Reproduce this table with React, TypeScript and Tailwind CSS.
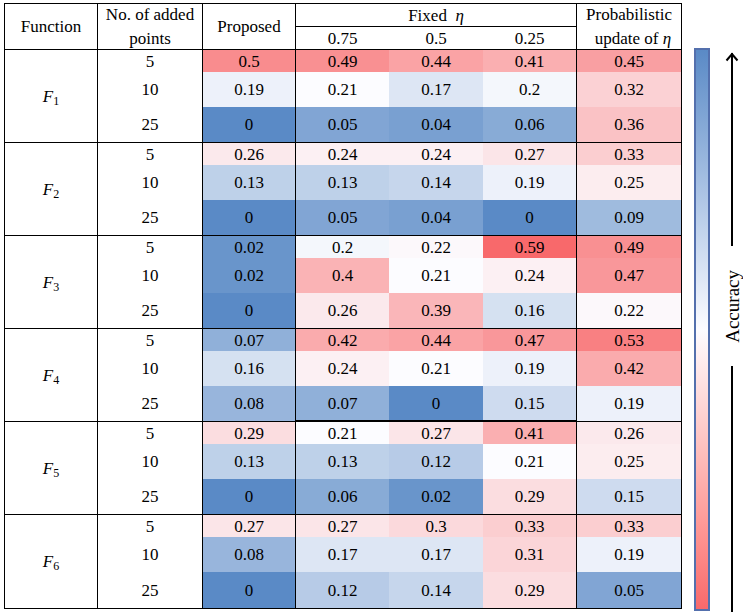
import React from "react";

type Block = { label: string; rows: { n: number; vals: number[] }[] };

const blocks: Block[] = [
  { label: "1", rows: [
    { n: 5, vals: [0.5, 0.49, 0.44, 0.41, 0.45] },
    { n: 10, vals: [0.19, 0.21, 0.17, 0.2, 0.32] },
    { n: 25, vals: [0, 0.05, 0.04, 0.06, 0.36] },
  ] },
  { label: "2", rows: [
    { n: 5, vals: [0.26, 0.24, 0.24, 0.27, 0.33] },
    { n: 10, vals: [0.13, 0.13, 0.14, 0.19, 0.25] },
    { n: 25, vals: [0, 0.05, 0.04, 0, 0.09] },
  ] },
  { label: "3", rows: [
    { n: 5, vals: [0.02, 0.2, 0.22, 0.59, 0.49] },
    { n: 10, vals: [0.02, 0.4, 0.21, 0.24, 0.47] },
    { n: 25, vals: [0, 0.26, 0.39, 0.16, 0.22] },
  ] },
  { label: "4", rows: [
    { n: 5, vals: [0.07, 0.42, 0.44, 0.47, 0.53] },
    { n: 10, vals: [0.16, 0.24, 0.21, 0.19, 0.42] },
    { n: 25, vals: [0.08, 0.07, 0, 0.15, 0.19] },
  ] },
  { label: "5", rows: [
    { n: 5, vals: [0.29, 0.21, 0.27, 0.41, 0.26] },
    { n: 10, vals: [0.13, 0.13, 0.12, 0.21, 0.25] },
    { n: 25, vals: [0, 0.06, 0.02, 0.29, 0.15] },
  ] },
  { label: "6", rows: [
    { n: 5, vals: [0.27, 0.27, 0.3, 0.33, 0.33] },
    { n: 10, vals: [0.08, 0.17, 0.17, 0.31, 0.19] },
    { n: 25, vals: [0, 0.12, 0.14, 0.29, 0.05] },
  ] },
];

// excel style 3-colour scale: min blue, median white, max red
const all = blocks.flatMap((b) => b.rows.flatMap((r) => r.vals)).sort((a, b) => a - b);
const lo = all[0];
const hi = all[all.length - 1];
const mid = (all[44] + all[45]) / 2;
const BLUE = [90, 138, 198];
const WHITE = [252, 252, 255];
const RED = [248, 105, 107];

function mix(a: number[], b: number[], t: number) {
  const c = a.map((v, i) => Math.round(v + (b[i] - v) * t));
  return `rgb(${c[0]}, ${c[1]}, ${c[2]})`;
}

function cellColor(v: number) {
  if (v <= mid) return mix(BLUE, WHITE, (v - lo) / (mid - lo));
  return mix(WHITE, RED, (v - mid) / (hi - mid));
}

function Eta() {
  return <i>η</i>;
}

const cell = "flex items-center justify-center border-black";

export default function App() {
  return (
    <div className="flex h-[614px] w-[747px] bg-white pl-[4px] pt-[3px] font-['Liberation_Serif',serif] text-[17px] leading-none text-black">
      <div className="grid h-fit grid-cols-[93px_105px_93px_93px_94px_94px_104px] grid-rows-[23px_23px_repeat(6,22px_35px_36px)] border-[1.5px] border-black">
        {/* header */}
        <div className={`${cell} row-span-2 border-r-[1.5px] border-b-[1.5px]`}>Function</div>
        <div className={`${cell} row-span-2 flex-col gap-[7px] border-r-[1.5px] border-b-[1.5px]`}>
          <span>No. of added</span>
          <span>points</span>
        </div>
        <div className={`${cell} row-span-2 border-r-[1.5px] border-b-[1.5px]`}>Proposed</div>
        <div className={`${cell} col-span-3 border-r-[1.5px] border-b-[1.5px]`}>
          <span>
            Fixed&nbsp; <Eta />
          </span>
        </div>
        <div className={`${cell} row-span-2 flex-col gap-[7px] border-b-[1.5px]`}>
          <span>Probabilistic</span>
          <span className="pl-[8px]">
            update of <Eta />
          </span>
        </div>
        <div className={`${cell} border-b-[1.5px]`}>0.75</div>
        <div className={`${cell} border-b-[1.5px]`}>0.5</div>
        <div className={`${cell} border-r-[1.5px] border-b-[1.5px]`}>0.25</div>

        {/* body */}
        {blocks.map((b, bi) => {
          const lastBlock = bi === blocks.length - 1;
          return b.rows.map((r, ri) => {
            const lastRow = ri === 2 && !lastBlock;
            return (
              <React.Fragment key={`${bi}-${ri}`}>
                {ri === 0 && (
                  <div className={`${cell} row-span-3 border-r-[1.5px] ${lastBlock ? "" : "border-b-[1.5px]"}`}>
                    <span>
                      <i>F</i>
                      <sub className="text-[12px]">{b.label}</sub>
                    </span>
                  </div>
                )}
                <div className={`${cell} border-r-[1.5px] ${lastRow ? "border-b-[1.5px]" : ""}`}>{r.n}</div>
                {r.vals.map((v, vi) => {
                  const thick = bi === 3 && ri === 2 && vi >= 1 && vi <= 3;
                  return (
                    <div
                      key={vi}
                      className={`${cell} ${vi === 0 || vi === 3 ? "border-r-[1.5px]" : ""} ${
                        thick ? "border-b-[2.5px]" : lastRow ? "border-b-[1.5px]" : ""
                      }`}
                      style={{ backgroundColor: cellColor(v) }}
                    >
                      {v}
                    </div>
                  );
                })}
              </React.Fragment>
            );
          });
        })}
      </div>

      <div className="ml-[12px] mt-[45px] h-[563px] w-[16px] border-2 border-[#5470ad] bg-linear-to-b from-[#5a8ac6] via-[#fcfcff] to-[#f8696b]" />

      <div className="ml-[15px] mt-[49px] flex w-[14px] flex-col items-center">
        <div className="flex h-[194px] flex-col items-center">
          <svg width="14" height="10" viewBox="0 0 14 10" className="-mb-[9px]">
            <path d="M1.5 8.5 L7 2 L12.5 8.5" fill="none" stroke="black" strokeWidth="2" />
          </svg>
          <div className="w-[2px] flex-1 bg-black" />
        </div>
        <div className="flex h-[120px] items-center justify-center">
          <span className="rotate-180 text-[19px] [writing-mode:vertical-rl]">Accuracy</span>
        </div>
        <div className="h-[246px] w-[2px] bg-black" />
      </div>
    </div>
  );
}
